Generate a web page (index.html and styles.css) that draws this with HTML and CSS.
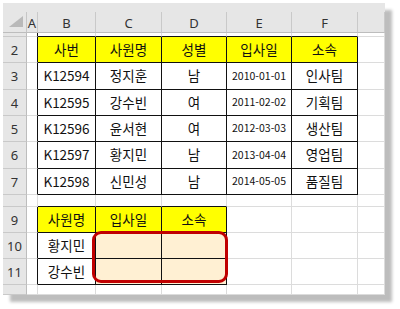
FILE: index.html
```html
<!DOCTYPE html>
<html lang="ko">
<head>
<meta charset="utf-8">
<link rel="stylesheet" href="styles.css">
</head>
<body>
<div class="sheet">
  <div class="grid">
    <div class="strip"></div>

    <div class="corner"><svg class="tri" width="14" height="11" viewBox="0 0 14 11"><polygon points="14,0 14,11 0,11" fill="#b9b9b9"/></svg></div>
    <div class="ch">A</div><div class="ch">B</div><div class="ch">C</div><div class="ch">D</div><div class="ch">E</div><div class="ch">F</div><div class="ch"></div>

    <div class="rh"></div><div class="c bl-r"></div><div class="c bl-b"></div><div class="c bl-b"></div><div class="c bl-b"></div><div class="c bl-b"></div><div class="c bl-b"></div><div class="c"></div>

    <div class="rh">2</div><div class="c bl-r"></div><div class="c t hd">사번</div><div class="c t hd">사원명</div><div class="c t hd">성별</div><div class="c t hd">입사일</div><div class="c t hd">소속</div><div class="c"></div>
    <div class="rh">3</div><div class="c bl-r"></div><div class="c t">K12594</div><div class="c t">정지훈</div><div class="c t">남</div><div class="c t dt">2010-01-01</div><div class="c t">인사팀</div><div class="c"></div>
    <div class="rh">4</div><div class="c bl-r"></div><div class="c t">K12595</div><div class="c t">강수빈</div><div class="c t">여</div><div class="c t dt">2011-02-02</div><div class="c t">기획팀</div><div class="c"></div>
    <div class="rh">5</div><div class="c bl-r"></div><div class="c t">K12596</div><div class="c t">윤서현</div><div class="c t">여</div><div class="c t dt">2012-03-03</div><div class="c t">생산팀</div><div class="c"></div>
    <div class="rh">6</div><div class="c bl-r"></div><div class="c t">K12597</div><div class="c t">황지민</div><div class="c t">남</div><div class="c t dt">2013-04-04</div><div class="c t">영업팀</div><div class="c"></div>
    <div class="rh">7</div><div class="c bl-r"></div><div class="c t">K12598</div><div class="c t">신민성</div><div class="c t">남</div><div class="c t dt">2014-05-05</div><div class="c t">품질팀</div><div class="c"></div>

    <div class="rh"></div><div class="c"></div><div class="c bl-b"></div><div class="c bl-b"></div><div class="c bl-b"></div><div class="c"></div><div class="c"></div><div class="c"></div>

    <div class="rh">9</div><div class="c bl-r"></div><div class="c t hd">사원명</div><div class="c t hd">입사일</div><div class="c t hd">소속</div><div class="c"></div><div class="c"></div><div class="c"></div>
    <div class="rh">10</div><div class="c bl-r"></div><div class="c t">황지민</div><div class="c t in"></div><div class="c t in"></div><div class="c"></div><div class="c"></div><div class="c"></div>
    <div class="rh">11</div><div class="c bl-r"></div><div class="c t">강수빈</div><div class="c t in"></div><div class="c t in"></div><div class="c"></div><div class="c"></div><div class="c"></div>

    <div class="rh"></div><div class="c"></div><div class="c"></div><div class="c"></div><div class="c"></div><div class="c"></div><div class="c"></div><div class="c"></div>
  </div>
  <div class="mark"></div>
</div>
</body>
</html>
```

FILE: styles.css
```css
* { box-sizing: border-box; }
html, body { margin: 0; padding: 0; background: #fff; }
body {
  width: 400px;
  height: 309px;
  overflow: hidden;
  font-family: "Noto Sans CJK KR", "Noto Sans", sans-serif;
  color: #111;
}
.sheet {
  position: relative;
  margin: 3px 0 0 3px;
  width: 382px;
  background: #fff;
  box-shadow: 7px 7px 3px #bdbdbd;
}
.grid {
  display: grid;
  grid-template-columns: 24px 11px 58px 66px 65px 65px 66px 27px;
  grid-template-rows: 9px 21px 4px 26px 27px 26px 26px 27px 26px 12px 26px 26px 26px 10px;
}
.strip {
  grid-column: 1 / -1;
  background: #e6e6e6;
}
.corner {
  position: relative;
  background: #e6e6e6;
  border-right: 1px solid #c6c6c6;
  border-bottom: 1px solid #bdbdbd;
}
.tri { position: absolute; right: 3px; bottom: 5px; }
.ch {
  background: #e6e6e6;
  border-right: 1px solid #c9c9c9;
  border-bottom: 1px solid #bdbdbd;
  display: flex;
  align-items: center;
  justify-content: center;
  font-family: "Noto Sans", sans-serif;
  font-size: 13px;
  color: #333;
  padding-top: 1px;
}
.rh {
  background: #e6e6e6;
  border-right: 1px solid #bdbdbd;
  border-bottom: 1px solid #c9c9c9;
  display: flex;
  align-items: center;
  justify-content: center;
  font-family: "Noto Sans", sans-serif;
  font-size: 13px;
  color: #333;
}
.c {
  border-right: 1px solid #dcdcdc;
  border-bottom: 1px solid #dcdcdc;
}
.bl-r { border-right-color: #111; }
.bl-b { border-bottom-color: #111; }
.t {
  border-right-color: #111;
  border-bottom-color: #111;
  display: flex;
  align-items: center;
  justify-content: center;
  font-size: 13.5px;
  line-height: 1;
  color: #111;
}
.hd { background: #ffff00; }
.dt { font-size: 10.5px; }
.in { background: #fff0d3; }
.mark {
  position: absolute;
  left: 89px;
  top: 228px;
  width: 136px;
  height: 52px;
  border: 3px solid #c00000;
  border-radius: 9px;
}
```
